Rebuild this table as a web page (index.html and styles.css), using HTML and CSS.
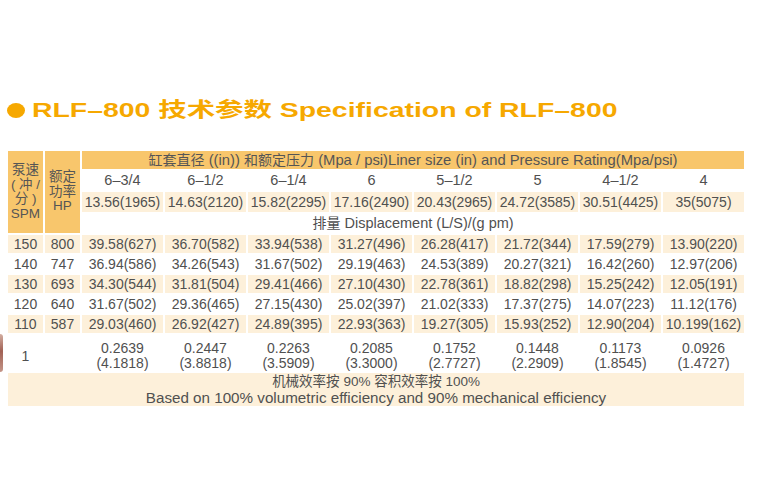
FILE: index.html
```html
<!DOCTYPE html>
<html lang="zh">
<head>
<meta charset="utf-8">
<title>RLF-800 Specification</title>
<link rel="stylesheet" href="styles.css">
</head>
<body>
<div class="page">
  <span class="edge"></span>
  <h1 class="title"><span class="dot"></span><span class="title-text">RLF–800 技术参数 Specification of RLF–800</span></h1>
  <table class="spec">
    <colgroup>
      <col class="c-side"><col class="c-side">
      <col class="c-data"><col class="c-data"><col class="c-data"><col class="c-data">
      <col class="c-data"><col class="c-data"><col class="c-data"><col class="c-data">
    </colgroup>
    <tr class="r-band">
      <th rowspan="4" class="side">泵速<br>( 冲 /<br>分 )<br>SPM</th>
      <th rowspan="4" class="side">额定<br>功率<br>HP</th>
      <th colspan="8" class="band"><span class="cjk">缸套直径</span> ((in)) <span class="cjk">和额定压力</span> (Mpa / psi)Liner size (in) and Pressure Rating(Mpa/psi)</th>
    </tr>
    <tr class="r-size">
      <td>6–3/4</td><td>6–1/2</td><td>6–1/4</td><td>6</td><td>5–1/2</td><td>5</td><td>4–1/2</td><td>4</td>
    </tr>
    <tr class="r-press tint">
      <td>13.56(1965)</td><td>14.63(2120)</td><td>15.82(2295)</td><td>17.16(2490)</td><td>20.43(2965)</td><td>24.72(3585)</td><td>30.51(4425)</td><td>35(5075)</td>
    </tr>
    <tr class="r-disp">
      <td colspan="8"><span class="cjk">排量</span> Displacement (L/S)/(g pm)</td>
    </tr>
    <tr class="r-data tint">
      <td>150</td><td>800</td><td>39.58(627)</td><td>36.70(582)</td><td>33.94(538)</td><td>31.27(496)</td><td>26.28(417)</td><td>21.72(344)</td><td>17.59(279)</td><td>13.90(220)</td>
    </tr>
    <tr class="r-data">
      <td>140</td><td>747</td><td>36.94(586)</td><td>34.26(543)</td><td>31.67(502)</td><td>29.19(463)</td><td>24.53(389)</td><td>20.27(321)</td><td>16.42(260)</td><td>12.97(206)</td>
    </tr>
    <tr class="r-data tint">
      <td>130</td><td>693</td><td>34.30(544)</td><td>31.81(504)</td><td>29.41(466)</td><td>27.10(430)</td><td>22.78(361)</td><td>18.82(298)</td><td>15.25(242)</td><td>12.05(191)</td>
    </tr>
    <tr class="r-data">
      <td>120</td><td>640</td><td>31.67(502)</td><td>29.36(465)</td><td>27.15(430)</td><td>25.02(397)</td><td>21.02(333)</td><td>17.37(275)</td><td>14.07(223)</td><td>11.12(176)</td>
    </tr>
    <tr class="r-data tint">
      <td>110</td><td>587</td><td>29.03(460)</td><td>26.92(427)</td><td>24.89(395)</td><td>22.93(363)</td><td>19.27(305)</td><td>15.93(252)</td><td>12.90(204)</td><td>10.199(162)</td>
    </tr>
    <tr class="r-unit">
      <td>1</td><td></td>
      <td>0.2639<br>(4.1818)</td><td>0.2447<br>(3.8818)</td><td>0.2263<br>(3.5909)</td><td>0.2085<br>(3.3000)</td>
      <td>0.1752<br>(2.7727)</td><td>0.1448<br>(2.2909)</td><td>0.1173<br>(1.8545)</td><td>0.0926<br>(1.4727)</td>
    </tr>
    <tr class="r-foot tint">
      <td colspan="10"><span class="foot-cn">机械效率按 90% 容积效率按 100%</span><br><span class="foot-en">Based on 100% volumetric efficiency and 90% mechanical efficiency</span></td>
    </tr>
  </table>
</div>
</body>
</html>
```

FILE: styles.css
```css
* { box-sizing: border-box; }

html, body {
  margin: 0;
  padding: 0;
  background: #ffffff;
}

body {
  font-family: "Liberation Sans", Arial, "Noto Sans CJK SC", sans-serif;
  color: #505050;
}

.page {
  position: relative;
  width: 768px;
  height: 479px;
  padding-top: 100px;
}

.edge {
  position: absolute;
  left: -3px;
  top: 334px;
  width: 6px;
  height: 38px;
  border-radius: 3px;
  background: linear-gradient(180deg, #c89a8a 0%, #8a3a2a 45%, #b57a6a 100%);
  opacity: 0.8;
}

.title {
  display: flex;
  align-items: center;
  margin: 0 0 29px 7px;
  height: 20px;
  font-size: 20px;
  line-height: 20px;
  font-weight: bold;
  color: #f6a800;
  white-space: nowrap;
}

.dot {
  display: inline-block;
  width: 18px;
  height: 15px;
  border-radius: 50%;
  background: #f6a800;
  margin-right: 7px;
  flex: none;
}

.title-text {
  display: inline-block;
  transform: scaleX(1.42);
  transform-origin: left center;
}

.spec {
  margin-left: 6px;
  border-collapse: separate;
  border-spacing: 2px;
  table-layout: fixed;
  width: 740px;
  font-size: 14px;
  line-height: 15px;
  color: #505050;
}

.c-side { width: 35px; }
.c-data { width: 81px; }

.spec th,
.spec td {
  padding: 0;
  text-align: center;
  vertical-align: middle;
  font-weight: normal;
  white-space: nowrap;
}

.cjk { font-size: 14px; }

.side {
  background: #f8c66c;
  color: #555555;
  line-height: 14.5px;
  font-size: 13.5px;
}

.band {
  background: #f8c66c;
  color: #555555;
  font-size: 14.8px;
}

.r-size td { font-size: 14.5px; }
.r-disp td { font-size: 14.5px; }

.r-band { height: 18px; }
.r-size { height: 19px; }
.r-press { height: 20px; }
.r-disp { height: 19px; }
.r-data { height: 18px; }
.r-unit { height: 36px; }
.r-unit td { padding-top: 6px; line-height: 15px; }
.r-foot { height: 33px; }
.r-foot td { line-height: 16px; }

.foot-cn { font-size: 13.5px; }
.foot-en { font-size: 15.2px; }

.tint td { background: #fdf0da; }
```
